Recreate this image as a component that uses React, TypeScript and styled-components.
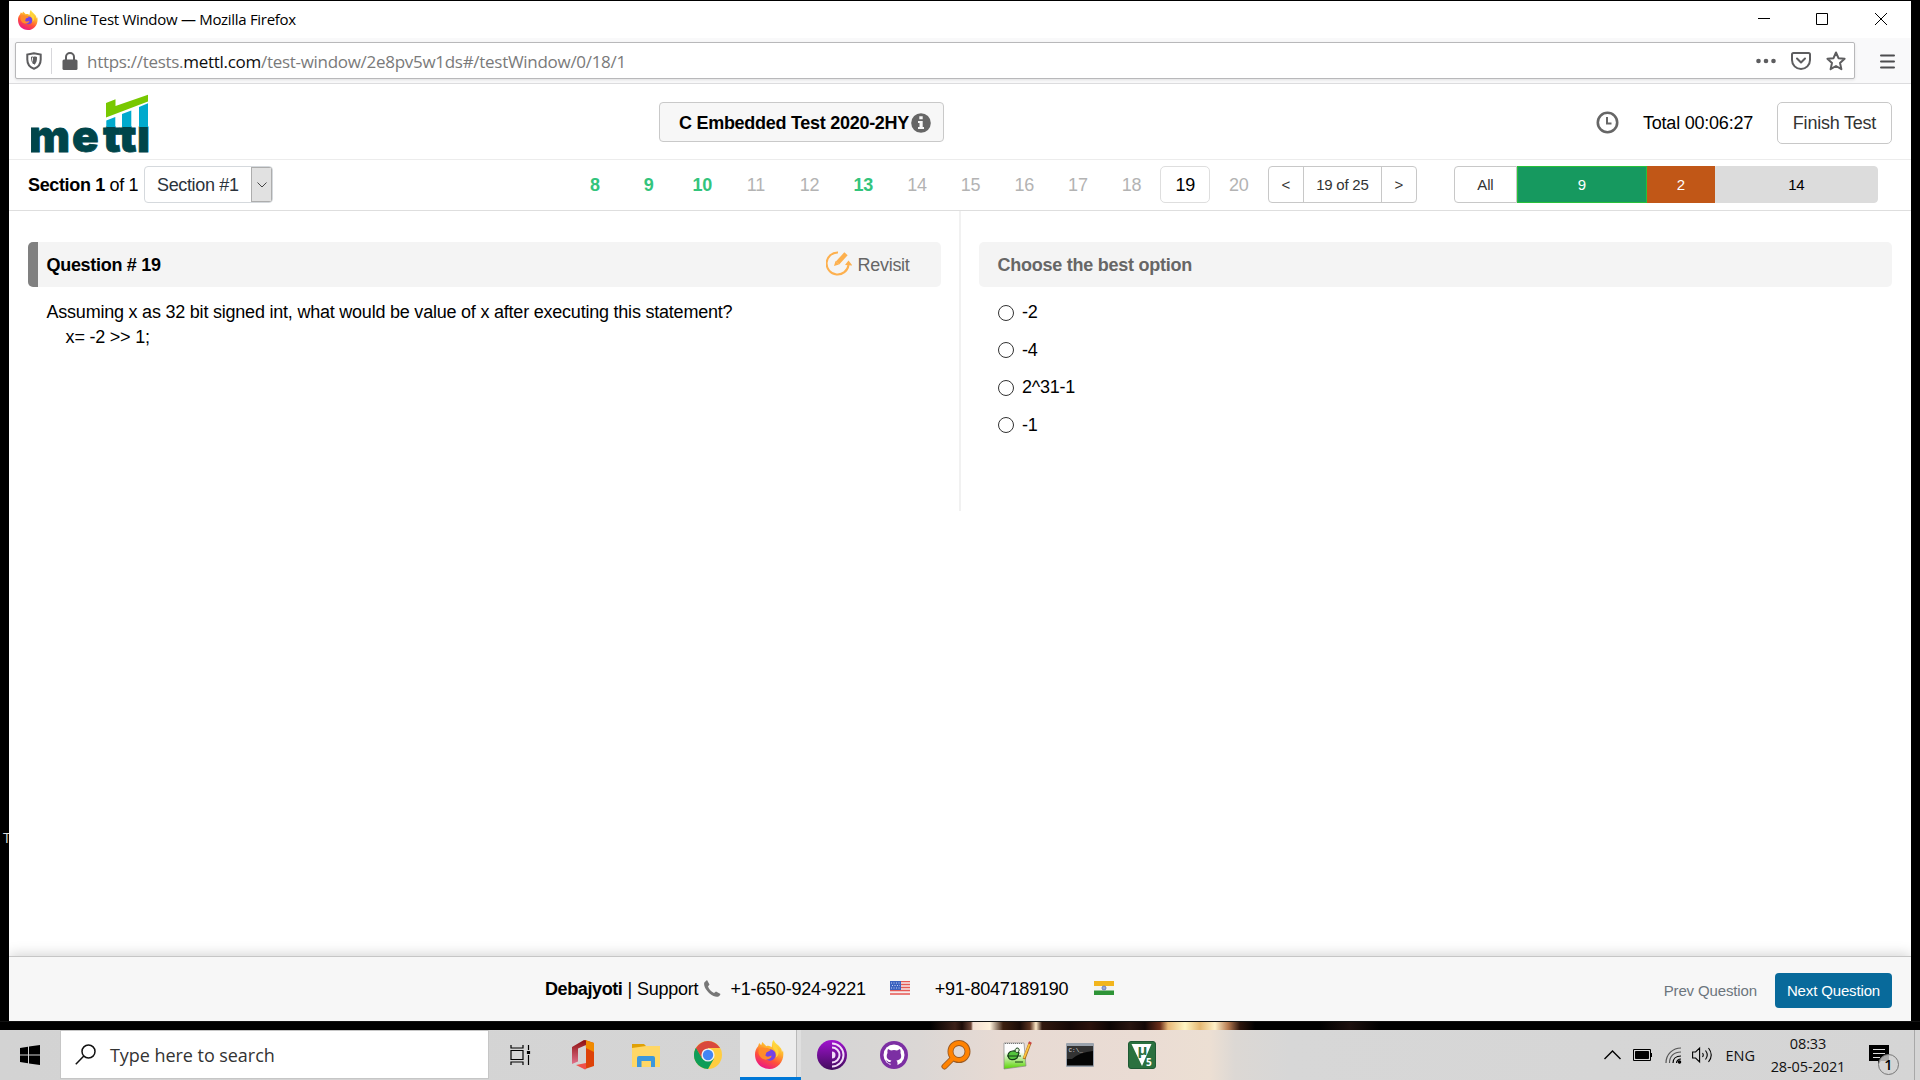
import React from "react";
import styled, { createGlobalStyle } from "styled-components";

const ui = `"Open Sans", "Noto Sans", sans-serif`;
const arial = `"Liberation Sans", Arial, sans-serif`;

const Global = createGlobalStyle`
  * { box-sizing: border-box; }
  html, body { margin: 0; background: #000; overflow: hidden; }
  button, select, input { font: inherit; letter-spacing: inherit; margin: 0; }
  svg { display: block; flex: none; }
`;

const Desktop = styled.div`
  width: 1920px; height: 1080px; padding-top: 1px; position: relative;
  display: flex; flex-direction: column; background: #000; overflow: hidden;
  font-family: ${arial}; font-size: 18px; letter-spacing: -0.22px; color: #000; white-space: nowrap;
`;
const DesktopLabel = styled.span`
  position: absolute; left: 3px; top: 829px;
  font: 14px/18px ${ui}; color: #ddd;
`;
const Window = styled.main`
  position: relative; margin: 0 9px; height: 1020px; background: #fff;
  display: flex; flex-direction: column;
`;
const TitleBar = styled.header`
  height: 37px; padding-left: 9px; display: flex; align-items: center;
  font-family: ${ui}; font-size: 15px;
`;
const WindowTitle = styled.span`
  margin: -1px 0 0 5px; flex: 1; letter-spacing: -0.3px;
`;
const WindowControls = styled.div`
  display: flex; gap: 44px; padding: 0 23px 1px 0;
`;
const Toolbar = styled.div`
  height: 46px; padding: 4px 16px 4px 6px; background: #f9f9fa;
  border-bottom: 1px solid #dcdcde; display: flex; justify-content: space-between; align-items: flex-start;
`;
const AddressBar = styled.div`
  width: 1840px; height: 37px; padding: 0 8px 0 10px; background: #fff;
  border: 1px solid #b8b8ba; border-radius: 2px; box-shadow: 0 1px 3px #0000001a;
  display: flex; align-items: center;
`;
const BarSeparator = styled.i`
  width: 1px; height: 26px; margin: 0 10px 0 9px; background: #d7d7db;
`;
const Url = styled.span`
  flex: 1; margin: 1px 0 0 9px; font-family: ${ui}; font-size: 17px; color: #7a7a7a;
  letter-spacing: -0.29px;
  b { font-weight: 400; color: #0c0c0d; }
`;
const AddressActions = styled.div`
  display: flex; align-items: center; gap: 15px;
`;
const MenuSlot = styled.div` padding-top: 12px; `;

const TestHeader = styled.section`
  height: 76px; padding: 0 19px 0 22px; border-bottom: 1px solid #ececec;
  display: grid; grid-template-columns: 628px 285px 1fr; align-items: center;
`;
const LogoSlot = styled.div` padding-top: 4px; `;
const TestTitle = styled.div`
  height: 40px; margin-top: 1px; padding: 1px 0 0 19px; display: flex; align-items: center; gap: 2px;
  border: 1px solid #c9c9c9; border-radius: 4px; background: #f7f7f7; font-weight: 700;
  span { letter-spacing: -0.28px; padding-top: 1px; }
  svg { margin-top: 1px; }
`;
const TimerArea = styled.div`
  display: flex; align-items: center; justify-content: flex-end; padding-top: 2px;
`;
const TimerText = styled.span` width: 110px; margin: 1px 24px 0 24px; `;
const FinishButton = styled.button`
  width: 115px; height: 42px; padding: 1px 0 0; border: 1px solid #c8c8c8; border-radius: 5px;
  background: #fff; color: #333;
`;

const Navigation = styled.nav`
  height: 51px; padding: 6px 32px 0 19px; border-bottom: 1px solid #dedede;
  display: flex; align-items: flex-start; line-height: 38px;
`;
const SectionLabel = styled.span` width: 116px; letter-spacing: -0.35px; `;
const SectionSelect = styled.div`
  width: 129px; height: 37px; border: 1px solid #d5d9dd; border-radius: 4px; line-height: 36px;
  display: flex; justify-content: space-between; padding-left: 12px; color: #2b333b; overflow: hidden;
  letter-spacing: -0.35px;
`;
const SelectArrow = styled.span`
  width: 21px; display: grid; place-items: center; background: #e1e1e1; border: 1px solid #adadad;
`;
const NumberList = styled.div`
  margin-left: 297px; display: flex; gap: 3.66px;
`;
const NumberItem = styled.span<{ $state?: "done" | "current" }>`
  width: 50px; height: 37px; text-align: center; line-height: 36px;
  border: 1px solid ${p => (p.$state === "current" ? "#dedede" : "transparent")}; border-radius: 5px;
  color: ${p => (p.$state === "done" ? "#33c47c" : p.$state === "current" ? "#000" : "#b3b3b3")};
  font-weight: ${p => (p.$state === "done" ? 700 : 400)};
`;
const Pager = styled.div`
  width: 149px; height: 37px; margin-left: 4px; border: 1px solid #c8c8c8; border-radius: 4px;
  display: grid; grid-template-columns: 34px 78px 1fr; font-size: 15px; line-height: 36px;
  text-align: center; color: #333;
  span + span { border-left: 1px solid #c8c8c8; }
`;
const Progress = styled.div`
  margin-left: 37px; display: flex; font-size: 15px; text-align: center;
`;
const Segment = styled.span<{ $w: number; $bg: string; $fg: string; $line?: string; $round?: string }>`
  width: ${p => p.$w}px; height: 37px; line-height: 36px; background: ${p => p.$bg}; color: ${p => p.$fg};
  border: 1px solid ${p => p.$line || p.$bg}; border-radius: ${p => p.$round || 0};
`;

const Body = styled.section`
  flex: 1; display: flex; align-items: flex-start;
`;
const Panel = styled.article<{ $right?: boolean }>`
  width: ${p => (p.$right ? 951 : 952)}px; height: 300px;
  padding: ${p => (p.$right ? "31px 19px 0 18px" : "31px 18px 0 19px")};
  border-right: ${p => (p.$right ? "0" : "2px solid #f1f1f1")};
`;
const PanelHead = styled.div<{ $accent?: boolean }>`
  height: 45px; padding: 1px 31px 0 ${p => (p.$accent ? 8.5 : 19)}px; display: flex; align-items: center;
  background: #f4f4f4; border-radius: 5px; border-left: ${p => (p.$accent ? "10px solid #808080" : "0")};
  color: ${p => (p.$accent ? "#000" : "#666")}; font-weight: 700;
  letter-spacing: ${p => (p.$accent ? -0.3 : -0.25)}px;
`;
const Revisit = styled.span`
  margin-left: auto; display: flex; align-items: center; gap: 6px; color: #666; font-weight: 400;
  svg { margin-bottom: 3px; }
`;
const QuestionText = styled.p`
  margin: 13px 0 0 18.5px; line-height: 25px; white-space: pre;
`;
const Options = styled.div`
  padding: 7px 0 0 19px;
`;
const Option = styled.label`
  height: 37.5px; display: flex; align-items: center; gap: 8.5px;
`;
const Radio = styled.i`
  width: 16px; height: 16px; border: 1px solid #333; border-radius: 50%; background: #fff;
`;

const Footer = styled.footer`
  height: 65px; padding: 0 19px 0 536px; border-top: 1px solid #c6c6c6; background: #f7f7f7;
  box-shadow: 0 -2px 12px #0000002b; clip-path: inset(-16px 0 0 0);
  display: flex; align-items: center; 
`;
const Contact = styled.div`
  display: flex; align-items: center; flex: 1; padding-top: 1px;
  b { letter-spacing: -0.4px; }
  svg { margin-bottom: 3px; }
`;
const Gap = styled.i<{ $w: number }>` width: ${p => p.$w}px; `;
const PrevLink = styled.span` font-size: 15px; letter-spacing: -0.13px; color: #6c757d; margin-right: 18px; padding-top: 3px; `;
const NextButton = styled.button`
  width: 117px; height: 35px; margin-top: 3px; padding: 0; border: 0; border-radius: 4px;
  background: #086a9b; color: #fff; font-size: 15px; letter-spacing: -0.15px;
`;

const Wallpaper = styled.div`
  height: 9px; border-top: 1px solid #111;
  background: linear-gradient(90deg, #000 930px, #3c2119 955px, #1c0c08 962px, #6d4638 971px, #f3dfd2 973px, #fff2dc 990px, #3c2010 1003px, #190b07 1020px, #5b3320 1030px, #ffe9c8 1036px, #31180e 1042px, #150806 1070px, #2b120c 1090px, #0c0504 1110px, #281510 1130px, #120706 1145px, #6c2e1a 1160px, #e8b878 1168px, #fff6c4 1185px, #e5b873 1200px, #fff1c8 1215px, #b87c52 1228px, #2c150c 1240px, #000 1255px, #000 1320px, #1c100e 1350px, #000 1380px);
`;
const Taskbar = styled.footer`
  height: 50px; display: flex; color: #111; font-family: ${ui};
  background: linear-gradient(90deg, #d3d3d3, #d5d5d5 820px, #dbd7d5 920px, #e7dad3 1000px, #eadcd4 1140px, #ecdfd3 1210px, #dcd8d4 1235px, #d7d7d7 1290px, #d5d5d5);
`;
const Cell = styled.div<{ $w: number }>`
  width: ${p => p.$w}px; display: grid; place-items: center; flex: none;
`;
const SearchBox = styled.div`
  width: 429px; height: 49px; padding-left: 14px; border: 1px solid #c6c6c6; background: #fff;
  display: flex; align-items: center; gap: 14px; font-size: 18px; letter-spacing: -0.05px; color: #333;
`;
const ActiveApp = styled.div`
  width: 61px; display: grid; place-items: center; padding: 0 2px 0 0; flex: none;
  background: linear-gradient(90deg, #ededed 56px, #b9b9b9 56px 57px, #dfdfdf 57px);
  border-bottom: 3px solid #0078d7; 
  svg { margin-top: 2px; }
`;
const Tray = styled.div`
  margin-left: auto; display: flex; align-items: center; font-size: 14.5px; letter-spacing: 0;
`;
const Clock = styled.div`
  width: 78px; margin: 0 22px 0 14px; text-align: center; line-height: 23px; letter-spacing: -0.1px;
`;
const Notify = styled.div` position: relative; width: 45px; height: 50px; padding-top: 14px; `;
const Badge = styled.span`
  position: absolute; left: 9px; top: 24px; width: 21px; height: 21px; border: 1px solid #777; border-radius: 50%;
  background: #d3d3d3cc; text-align: center; line-height: 19px; font-size: 14.5px; font-weight: 600; color: #000;
`;
const ShowDesktop = styled.i` width: 6px; height: 50px; border-left: 1px solid #a8a8a8; `;

const Firefox = ({ s, id }: { s: number; id: string }) => (
  <svg width={s} height={s} viewBox="0 0 28 28">
    <defs>
      <linearGradient id={id} x1=".8" y1="0" x2=".3" y2="1">
        <stop offset="0" stopColor="#fff14b" /><stop offset=".35" stopColor="#ffb12c" />
        <stop offset=".65" stopColor="#ff5238" /><stop offset="1" stopColor="#e9138b" />
      </linearGradient>
    </defs>
    <path fill={`url(#${id})`} d="M18 0c1 3 5 5 7 8 1 2 1 3 1 4l1-2c2 9-4 18-13 18C6 28 0 22 0 14c0-3 1-6 3-8l1-3 2 2 1-3 4 4c2-1 4 0 5 1 1-3 0-5 2-7z" />
    <circle cx="14.5" cy="14.5" r="5.500" fill="#7542e5" />
    <path d="M4 9c2-2 4-2 6-1 2-1 4 0 5 2l-4 2-1 3c2 2 4 1 6 0 0 4-8 6-11 1-2-2-2-5-1-7z" fill="#ff8b2a" />
    <path d="M18 9c3 2 3 6 2 8 3-2 4-6 1-10-1-2-2-2-3-4-1 2-1 4 0 6z" fill="#ffd43d" />
  </svg>
);

const Logo = () => (
  <svg width="122" height="60" viewBox="0 0 122 60">
    <defs><clipPath id="wordmark"><path d="M0 32.500h122V60H0z" /></clipPath></defs>
    <g clipPath="url(#wordmark)">
      <text x="-2.500 41 72 88 106" y="58" fill="#00454a" stroke="#00454a" strokeWidth=".8" fontFamily="Inter, Liberation Sans, sans-serif" fontWeight="900" fontSize="44" letterSpacing="0">mettl</text>
    </g>
    <path fill="#78c800" d="M75 9l9.500-3.800V12L117 .7V7.500L75 23.500z" />
    <path fill="#00aacd" d="M75.300 26.500l9-3.500V33h-9zM91 20l9.300-3.500V33H91zM108 13l9-3.700V33h-9z" />
  </svg>
);

const Flag = ({ kind }: { kind: "us" | "in" }) => (
  <svg width="20" height="14" viewBox="0 0 20 14">
    {kind === "us" ? (
      <>
        <rect width="20" height="14" fill="#f6eaea" />
        <path stroke="#e65a55" strokeWidth="1.3" d="M0 .7h20M0 3.500h20M0 6.500h20M0 9.500h20M0 13h20" />
        <rect width="11" height="9" fill="#3b62bf" />
        <path stroke="#c6d3f5" strokeDasharray="1 1.500" d="M1 2h9M2 4.500h8M1 7h9" />
      </>
    ) : (
      <>
        <rect width="20" height="14" fill="#f4f4f0" />
        <rect width="20" height="5" fill="#f2b51d" /><rect y="9.500" width="20" height="4.500" fill="#2e9437" />
        <circle cx="10" cy="7" r="2" fill="#9aa9d8" stroke="#6d80bf" />
      </>
    )}
  </svg>
);

const Office = () => (
  <svg width="24" height="30" viewBox="0 0 24 30">
    <defs><linearGradient id="office" x2="0" y2="1"><stop stopColor="#8e0f10" /><stop offset="1" stopColor="#e0718a" /></linearGradient></defs>
    <path fill="#dd4209" d="M14 0l9 3v23l-9 3-3-3 4-1V5z" />
    <path fill="#f08a00" d="M14 0l9 3v9l-8-4z" />
    <path fill="url(#office)" d="M1 7L13 0l2 .5V5L7 8.500v13L1 24z" />
    <path fill="#f0504a" d="M5 25l10-2v6l-1 .5z" />
  </svg>
);
const Folder = () => (
  <svg width="28" height="24" viewBox="0 0 28 24">
    <path fill="#e0a106" d="M0 1h12l2 2v4H0z" /><path fill="#ffd766" d="M0 5l14-2h14v21H0z" />
    <path fill="#3d97dc" d="M5 24V15q0-2 2-2h14q2 0 2 2v9h-4v-6H9.500v6z" />
  </svg>
);
const Chrome = () => (
  <svg width="28" height="28" viewBox="0 0 28 28">
    <circle cx="14" cy="14" r="14" fill="#ffcd40" />
    <path fill="#d9493d" d="M14 14L1.900 7A14 14 0 0 1 26.100 7H14z" />
    <path fill="#0f9d58" d="M1.900 7A14 14 0 0 0 14 28l6-10.500-6-3.500-6 3.500z" />
    <path fill="#d9493d" d="M1.900 7L8 17.500 14 7z" />
    <path fill="#0f9d58" d="M1.900 7A14 14 0 0 0 3 22L8 17.500z" />
    <circle cx="14" cy="14" r="6.600" fill="#f1f1f1" /><circle cx="14" cy="14" r="5.200" fill="#4285f4" />
  </svg>
);
const Tor = () => (
  <svg width="30" height="30" viewBox="0 0 30 30">
    <defs><linearGradient id="tor" x2="0" y2="1"><stop stopColor="#a012cf" /><stop offset="1" stopColor="#420c5d" /></linearGradient></defs>
    <circle cx="15" cy="15" r="15" fill="url(#tor)" />
    <path fill="none" stroke="#f2ddf8" strokeWidth="2" d="M15 3.500a11.500 11.500 0 0 1 0 23M15 7.500a7.500 7.500 0 0 1 0 15" />
    <path fill="#f2ddf8" d="M15 11.500a3.500 3.500 0 0 1 0 7z" />
  </svg>
);
const Github = () => (
  <svg width="28" height="28" viewBox="0 0 28 28">
    <circle cx="14" cy="14" r="14" fill="#7c2fa3" /><circle cx="14" cy="14" r="10.500" fill="#fff" />
    <path fill="#7c2fa3" d="M8 8l3 1.500q3-1 6 0L20 8q1 2 .5 4c2 5-.5 7-4 7.500q1 1 1 2.500v3h-7v-2.500c-3 .5-3-2-5-3 2-.5 2.500 2 5 1.500q0-1 1-1.500c-4-.5-6-3-4-7.500Q7 10 8 8z" />
  </svg>
);
const Magnifier = () => (
  <svg width="30" height="30" viewBox="0 0 30 30" fill="none" strokeLinecap="round">
    <g stroke="#9b5a22" strokeWidth="6"><path d="M12 18l-8.500 8.500" /><circle cx="18" cy="11.500" r="8.500" /></g>
    <g stroke="#ff8200" strokeWidth="4.200"><path d="M12 18l-8.500 8.500" /><circle cx="18" cy="11.500" r="8.500" /></g>
  </svg>
);
const Notepad = () => (
  <svg width="29" height="29" viewBox="0 0 29 29">
    <defs><linearGradient id="note" x2="0" y2="1"><stop offset=".35" stopColor="#fdfdfd" /><stop offset="1" stopColor="#58d300" /></linearGradient></defs>
    <path fill="url(#note)" stroke="#888" strokeWidth=".7" d="M1 2h20l2 23-22 3z" />
    <path stroke="#777" strokeDasharray="1 1" d="M2 2.500h18" />
    <path fill="#54c43c" stroke="#153d15" strokeWidth="1.200" d="M5 14c1-5 8-5 11-2l-2 5c-4 3-9 2-9-3zM4 15h14" />
    <path fill="#dff5d5" stroke="#153d15" d="M12 10c0-4 5-4 4 0-1 2-3 2-4 0zM12 21h8" />
    <path stroke="#a87020" strokeWidth="3" d="M27 2l-6 16" /><path stroke="#ffc23f" strokeWidth="1.800" d="M26.500 3l-5.500 14" />
    <path stroke="#c44" strokeWidth="3" d="M27.500 1l-1 2" />
  </svg>
);
const Cmd = () => (
  <svg width="28" height="24" viewBox="0 0 28 24">
    <rect width="28" height="24" rx="1" fill="#9ba3ad" /><rect x="1" y="3" width="26" height="19.500" fill="#050505" />
    <path fill="#333" d="M1 3h26v5Q14 9 6 16H1z" />
    <text x="2.500" y="9" fill="#ddd" fontSize="6" letterSpacing="0" fontFamily="Liberation Mono, monospace">C:\_</text>
  </svg>
);
const Vision = () => (
  <svg width="28" height="28" viewBox="0 0 28 28">
    <rect x=".5" y=".5" width="27" height="27" rx="2.500" fill="#2b713f" stroke="#1f5933" />
    <path fill="#fff" d="M3.500 3h20L14 25z" />
    <text x="9.500" y="14" fill="#2b713f" fontSize="15" fontWeight="700" fontFamily="Open Sans, sans-serif">µ</text>
    <text x="18" y="25" fill="#fff" fontSize="10" fontWeight="700" fontFamily="Open Sans, sans-serif">5</text>
  </svg>
);

const numbers = Array.from({ length: 13 }, (_, i) => i + 8);
const done = [8, 9, 10, 13];
const apps = [<Office />, <Folder />, <Chrome />];
const moreApps = [<Tor />, <Github />, <Magnifier />, <Notepad />, <Cmd />, <Vision />];

export default function App() {
  return (
    <>
      <Global />
      <Desktop>
        <DesktopLabel>T</DesktopLabel>
        <Window>
          <TitleBar>
            <Firefox s={20} id="ff-small" />
            <WindowTitle>Online Test Window — Mozilla Firefox</WindowTitle>
            <WindowControls>
              <svg width="14" height="14" stroke="#000"><path d="M0 6.500h12" /></svg>
              <svg width="14" height="14" stroke="#000" fill="none"><path d="M.5 1.500h11v11h-11z" /></svg>
              <svg width="14" height="14" stroke="#000"><path d="M1 1l12 12M13 1L1 13" /></svg>
            </WindowControls>
          </TitleBar>
          <Toolbar>
            <AddressBar>
              <svg width="16" height="18" viewBox="0 0 16 18" fill="none" stroke="#5d5d5f" strokeWidth="2">
                <path d="M8 1.200L1.300 2.500v5c0 5 3 8 6.700 9.300 3.700-1.300 6.700-4.300 6.700-9.300v-5z" /><path d="M8 4.500c2 0 3 .5 3 .5 0 4-.5 6-3 8z" fill="#5d5d5f" stroke="none" /><path d="M7.500 5H5.500c0 3 .5 5 2 7z" strokeWidth="1" />
              </svg>
              <BarSeparator />
              <svg width="16" height="18" viewBox="0 0 16 18"><rect x=".5" y="7.500" width="15" height="10.500" rx="1.500" fill="#5d5d5f" /><path d="M4 8V5a4 4 0 0 1 8 0v3" fill="none" stroke="#5d5d5f" strokeWidth="2" /></svg>
              <Url>https://tests.<b>mettl.com</b>/test-window/2e8pv5w1ds#/testWindow/0/18/1</Url>
              <AddressActions>
                <svg width="20" height="6" fill="#5d5d5f"><circle cx="2.500" cy="3" r="2.300" /><circle cx="10" cy="3" r="2.300" /><circle cx="17.500" cy="3" r="2.300" /></svg>
                <svg width="20" height="18" viewBox="0 0 20 18" fill="none" stroke="#5d5d5f" strokeWidth="2" strokeLinecap="round" strokeLinejoin="round"><path d="M2.500 1h15q1.500 0 1.500 1.500V8A9 9 0 0 1 1 8V2.500Q1 1 2.500 1zM6 6.500l4 4 4-4" /></svg>
                <svg width="20" height="20" viewBox="0 0 20 20" fill="none" stroke="#5d5d5f" strokeWidth="2" strokeLinejoin="round"><path d="M10 1.500l2.500 5.700 6.100.6-4.600 4.100 1.400 6.300L10 15l-5.400 3.200L6 11.900 1.400 7.800l6.100-.6z" /></svg>
              </AddressActions>
            </AddressBar>
            <MenuSlot><svg width="15" height="15" stroke="#4d4d4f" strokeWidth="2" strokeLinecap="round"><path d="M1 1.500h13M1 7.500h13M1 13.500h13" /></svg></MenuSlot>
          </Toolbar>
          <TestHeader>
            <LogoSlot><Logo /></LogoSlot>
            <TestTitle>
              <span>C Embedded Test 2020-2HY</span>
              <svg width="20" height="20" viewBox="0 0 20 20"><circle cx="10" cy="10" r="9.800" fill="#666" /><path fill="#f7f7f7" d="M8.300 3.300h3.400v3H8.300zM7 8h4.700v6H13v2H7v-2h1.500v-4H7z" /></svg>
            </TestTitle>
            <TimerArea>
              <svg width="23" height="23" viewBox="0 0 23 23" fill="none" stroke="#666" strokeWidth="2.600"><circle cx="11.500" cy="11.500" r="9.700" /><path strokeWidth="2" d="M11 6v6.500h4.500" /></svg>
              <TimerText>Total 00:06:27</TimerText>
              <FinishButton>Finish Test</FinishButton>
            </TimerArea>
          </TestHeader>
          <Navigation>
            <SectionLabel><b>Section 1</b> of 1</SectionLabel>
            <SectionSelect>Section #1<SelectArrow><svg width="10" height="6" fill="none" stroke="#444"><path d="M.5.5L5 5 9.500.5" /></svg></SelectArrow></SectionSelect>
            <NumberList>
              {numbers.map(n => <NumberItem key={n} $state={done.includes(n) ? "done" : n === 19 ? "current" : undefined}>{n}</NumberItem>)}
            </NumberList>
            <Pager><span>&lt;</span><span>19 of 25</span><span>&gt;</span></Pager>
            <Progress>
              <Segment $w={63} $bg="#fff" $fg="#333" $line="#c8c8c8" $round="4px 0 0 4px">All</Segment>
              <Segment $w={130} $bg="#16995f" $fg="#fff" $line="#28c03a">9</Segment>
              <Segment $w={68} $bg="#c15717" $fg="#fff">2</Segment>
              <Segment $w={163} $bg="#dcdcdc" $fg="#000" $round="0 4px 4px 0">14</Segment>
            </Progress>
          </Navigation>
          <Body>
            <Panel>
              <PanelHead $accent>
                Question # 19
                <Revisit>
                  <svg width="26" height="26" viewBox="0 0 26 26" fill="none" stroke="#fdb04e"><path strokeWidth="2" d="M12 1.500A11 11 0 1 0 22.500 14" /><path strokeWidth="4.500" d="M20 2.800L11.500 12" /><path fill="#fdb04e" stroke="none" d="M8 15l1.500-5 3.500 3.500zM22.500 9.500l4 5-7.500-.5z" /></svg>
                  Revisit
                </Revisit>
              </PanelHead>
              <QuestionText>{"Assuming x as 32 bit signed int, what would be value of x after executing this statement?\n    x= -2 >> 1;"}</QuestionText>
            </Panel>
            <Panel $right>
              <PanelHead>Choose the best option</PanelHead>
              <Options>
                {["-2", "-4", "2^31-1", "-1"].map(o => <Option key={o}><Radio />{o}</Option>)}
              </Options>
            </Panel>
          </Body>
          <Footer>
            <Contact>
              <b>Debajyoti</b><Gap $w={5} />|<Gap $w={5} />Support<Gap $w={6} />
              <svg width="17" height="17" viewBox="0 0 17 17" fill="#777"><path d="M3 0l2.500 4.500L4 6.500c1 3 3 5 6 6.500l2-1.500L16.500 14c-1 3-4 3.500-7 2C4 13-1 6.500.3 2.500z" /></svg>
              <Gap $w={9} />+1-650-924-9221<Gap $w={24} /><Flag kind="us" /><Gap $w={25} />+91-8047189190<Gap $w={26} /><Flag kind="in" />
            </Contact>
            <PrevLink>Prev Question</PrevLink>
            <NextButton>Next Question</NextButton>
          </Footer>
        </Window>
        <Wallpaper />
        <Taskbar>
          <Cell $w={60}><svg width="20" height="20" viewBox="0 0 20 20"><path d="M0 3l8-1.200v7.700H0zM9 1.600L20 0v9.500H9zM0 10.500h8v7.700L0 17zM9 10.500h11V20L9 18.400z" /></svg></Cell>
          <SearchBox>
            <svg width="21" height="21" viewBox="0 0 21 21" fill="none" stroke="#111" strokeWidth="1.500"><circle cx="13.500" cy="7.500" r="6.500" /><path d="M8.800 12L.8 20.200" /></svg>
            Type here to search
          </SearchBox>
          <Cell $w={63}><svg width="21" height="20" viewBox="0 0 21 20" fill="none" stroke="#000" strokeWidth="1.200"><path d="M1 0v3h12V0M1 20v-3h12v3M1 5.500h12v9H1zM18.500 0v5M18.500 10v10" /><path fill="#000" d="M17.500 6.500h2v2h-2z" /></svg></Cell>
          {apps.map((icon, i) => <Cell key={i} $w={62.5}>{icon}</Cell>)}
          <ActiveApp><Firefox s={29} id="ff-big" /></ActiveApp>
          {moreApps.map((icon, i) => <Cell key={i} $w={62}>{icon}</Cell>)}
          <Tray>
            <svg width="17" height="10" fill="none" stroke="#000" strokeWidth="1.400"><path d="M.5 9l8-8 8 8" /></svg>
            <Gap $w={12} />
            <svg width="20" height="12" fill="none" stroke="#000"><path d="M.5.5h17v11H.5z" /><path fill="#000" d="M2.500 2.500h13v7h-13zM18.500 4v4" /></svg>
            <Gap $w={12} />
            <svg width="17" height="17" viewBox="0 0 17 17" fill="none" stroke="#000" strokeWidth="1.200"><path stroke="#555" d="M1 16C1 7 8 1 16 1M4.500 16C4.500 9 9 5 16 5" /><path d="M8 16c0-4 3-7 8-7M11.500 16c0-2 2-4 4.500-4" /><circle cx="14.500" cy="15" r="1.200" fill="#000" /></svg>
            <Gap $w={10} />
            <svg width="21" height="18" viewBox="0 0 21 18" fill="none" stroke="#000" strokeWidth="1.100"><path d="M.6 6h3l4-4v14l-4-4h-3zM10.500 7q1.500 2 0 4M13.500 4.500q3.500 4.500 0 9M16.500 2q5.500 7 0 14" /></svg>
            <Gap $w={12} />ENG
            <Clock>08:33<br />28-05-2021</Clock>
            <Notify><svg width="21" height="20" viewBox="0 0 21 20"><path d="M0 1h20v16h-8l-3 3v-3H0z" /><path stroke="#ddd" d="M4 5.500h12M4 9.500h12M4 13.500h7" /></svg><Badge>1</Badge></Notify>
            <ShowDesktop />
          </Tray>
        </Taskbar>
      </Desktop>
    </>
  );
}
